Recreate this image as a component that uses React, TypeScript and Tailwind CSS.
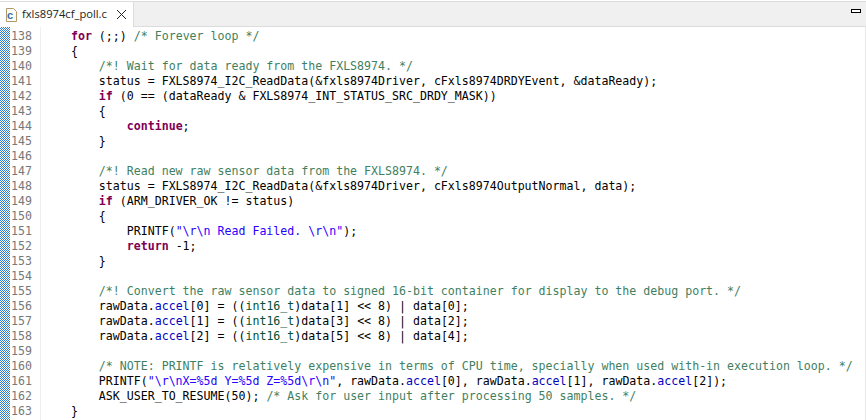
import React from "react";

type Seg = [string, "k" | "c" | "s" | "n" | "m" | "f"];
const K = (t: string): Seg => [t, "k"];
const C = (t: string): Seg => [t, "c"];
const S = (t: string): Seg => [t, "s"];
const N = (t: string): Seg => [t, "n"];
const M = (t: string): Seg => [t, "m"];
const F = (t: string): Seg => [t, "f"];

const cls: Record<string, string> = {
  k: "text-[#7f0055] font-bold",
  c: "text-[#3f7f5f]",
  s: "text-[#2a00ff]",
  n: "text-[#000000]",
  m: "text-[#005032]",
  f: "text-[#0000c0]",
};

const lines: Seg[][] = [
  [N("    "), K("for"), N(" (;;) "), C("/* Forever loop */")],
  [N("    {")],
  [N("        "), C("/*! Wait for data ready from the FXLS8974. */")],
  [N("        status = FXLS8974_I2C_ReadData(&fxls8974Driver, cFxls8974DRDYEvent, &dataReady);")],
  [N("        "), K("if"), N(" (0 == (dataReady & FXLS8974_INT_STATUS_SRC_DRDY_MASK))")],
  [N("        {")],
  [N("            "), K("continue"), N(";")],
  [N("        }")],
  [],
  [N("        "), C("/*! Read new raw sensor data from the FXLS8974. */")],
  [N("        status = FXLS8974_I2C_ReadData(&fxls8974Driver, cFxls8974OutputNormal, data);")],
  [N("        "), K("if"), N(" (ARM_DRIVER_OK != status)")],
  [N("        {")],
  [N("            PRINTF("), S('"\\r\\n Read Failed. \\r\\n"'), N(");")],
  [N("            "), K("return"), N(" -1;")],
  [N("        }")],
  [],
  [N("        "), C("/*! Convert the raw sensor data to signed 16-bit container for display to the debug port. */")],
  [N("        rawData."), F("accel"), N("[0] = (("), M("int16_t"), N(")data[1] << 8) | data[0];")],
  [N("        rawData."), F("accel"), N("[1] = (("), M("int16_t"), N(")data[3] << 8) | data[2];")],
  [N("        rawData."), F("accel"), N("[2] = (("), M("int16_t"), N(")data[5] << 8) | data[4];")],
  [],
  [N("        "), C("/* NOTE: PRINTF is relatively expensive in terms of CPU time, specially when used with-in execution loop. */")],
  [N("        PRINTF("), S('"\\r\\nX=%5d Y=%5d Z=%5d\\r\\n"'), N(", rawData."), F("accel"), N("[0], rawData."), F("accel"), N("[1], rawData."), F("accel"), N("[2]);")],
  [N("        ASK_USER_TO_RESUME(50); "), C("/* Ask for user input after processing 50 samples. */")],
  [N("    }")],
];

export default function App() {
  return (
    <div className="flex h-[420px] w-[866px] flex-col overflow-hidden bg-white">
      <div className="h-px shrink-0 bg-white" />
      <div className="flex h-[26px] shrink-0 border-t border-[#dcdcdc]">
        <div className="flex w-[134px] shrink-0 items-center border-r border-[#dcdcdc] bg-white pl-[5px] font-['Open_Sans',sans-serif] text-[11.2px] text-[#222]">
          <svg width="12" height="14" viewBox="0 0 12 14" className="shrink-0">
            <path d="M1.500 .5h7l3 3v10h-10z" fill="#fffdf5" stroke="#b09a6a" />
            <text x="2" y="11" fontSize="11" fontWeight="700" fill="#2f6fb0" fontFamily="Liberation Sans, sans-serif">c</text>
          </svg>
          <span className="ml-[5px] whitespace-nowrap">fxls8974cf_poll.c</span>
          <svg width="11" height="11" viewBox="0 0 11 11" className="ml-[9px] shrink-0">
            <line x1="1" y1="1" x2="10" y2="10" stroke="#222222" strokeWidth="1" />
            <line x1="10" y1="1" x2="1" y2="10" stroke="#222222" strokeWidth="1" />
          </svg>
        </div>
        <div className="flex flex-1 justify-end border-b border-[#dcdcdc] bg-[#f0f0f0] pr-[5px] pt-[7px]">
          <div className="h-[4px] w-[10px] border border-black bg-white" />
        </div>
      </div>
      <div className="flex min-h-0 flex-1 border-r border-[#e8e8e8]">
        <div className="w-[10px] shrink-0 bg-[repeating-conic-gradient(#2f7fd0_0_25%,#ffffff_0_50%)] bg-[length:2px_2px]" />
        <div className="w-[31px] shrink-0 border-r border-[#efefef] pt-[2px]">
          {lines.map((_, i) => (
            <div key={i} className="h-[15px] pl-[1px] font-['DejaVu_Sans_Mono',monospace] text-[11.6px] leading-[15px] text-[#787878]">
              {138 + i}
            </div>
          ))}
        </div>
        <div className="flex-1 pl-[2px] pt-[2px]">
          {lines.map((segs, i) => (
            <div key={i} className="h-[15px] whitespace-pre font-['DejaVu_Sans_Mono',monospace] text-[11.6px] leading-[15px]">
              {segs.map((s, j) => (
                <span key={j} className={cls[s[1]]}>{s[0]}</span>
              ))}
            </div>
          ))}
        </div>
      </div>
    </div>
  );
}
